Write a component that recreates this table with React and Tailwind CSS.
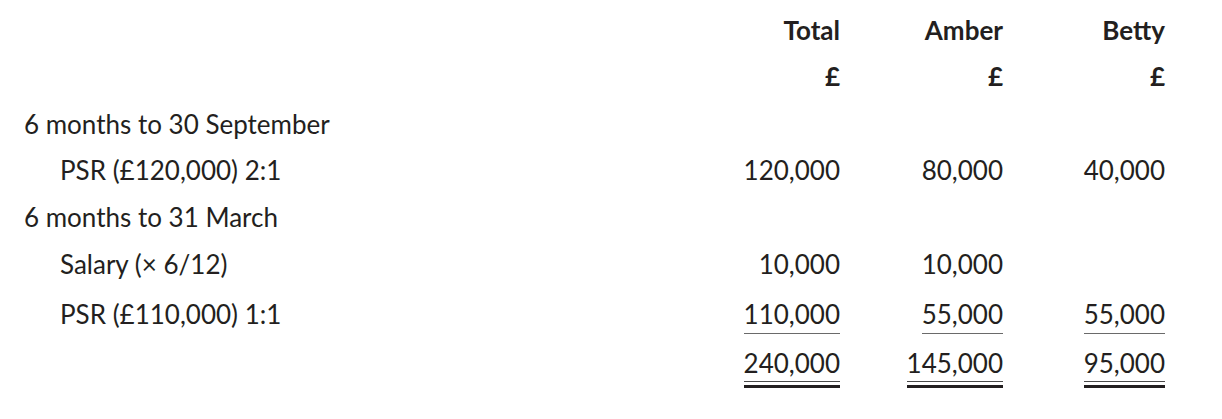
const rows = [
  { label: '6 months to 30 September', head: true, h: 'h-[46px]' },
  { label: 'PSR (£120,000) 2:1', values: ['120,000', '80,000', '40,000'], h: 'h-[47px]' },
  { label: '6 months to 31 March', head: true, h: 'h-[47px]' },
  { label: 'Salary (× 6/12)', values: ['10,000', '10,000', ''], h: 'h-[50px]' },
  { label: 'PSR (£110,000) 1:1', values: ['110,000', '55,000', '55,000'], line: 'single', h: 'h-[49px]' },
  { label: '', values: ['240,000', '145,000', '95,000'], line: 'double', h: 'h-[47px]' },
];

function Amount({ value, line }) {
  if (!value) return null;
  return (
    <span className="relative inline-block">
      {value}
      {line === 'single' && (
        <span className="absolute left-0 right-0 top-[34px] h-[1px] bg-[#6a6a6a]" />
      )}
      {line === 'double' && (
        <>
          <span className="absolute left-0 right-0 top-[33px] h-[1px] bg-[#4a4a4a]" />
          <span className="absolute left-0 right-0 top-[37px] h-[3px] bg-[#231f20]" />
        </>
      )}
    </span>
  );
}

export default function App() {
  return (
    <div
      className="w-[1222px] h-[419px] bg-white pt-[15px] pr-[57px] text-[#231f20] text-[26px] leading-[31px]"
      style={{ fontFamily: 'Lato, "Noto Sans", sans-serif' }}
    >
      <div className="grid grid-cols-[1fr_163px_163px_162px]">
        <div className="h-[46px]" />
        {['Total', 'Amber', 'Betty'].map((h) => (
          <div key={h} className="h-[46px] text-right font-bold">
            {h}
          </div>
        ))}
        <div className="h-[48px]" />
        {['Total', 'Amber', 'Betty'].map((h) => (
          <div key={h} className="h-[48px] text-right font-bold">
            £
          </div>
        ))}
        {rows.map((r, i) =>
          r.head ? (
            <div key={i} className={`col-span-4 pl-[24px] ${r.h}`}>
              {r.label}
            </div>
          ) : (
            [
              <div key={`${i}l`} className={`pl-[60px] ${r.h}`}>
                {r.label}
              </div>,
              ...r.values.map((v, j) => (
                <div key={`${i}-${j}`} className={`text-right ${r.h}`}>
                  <Amount value={v} line={r.line} />
                </div>
              )),
            ]
          )
        )}
      </div>
    </div>
  );
}
